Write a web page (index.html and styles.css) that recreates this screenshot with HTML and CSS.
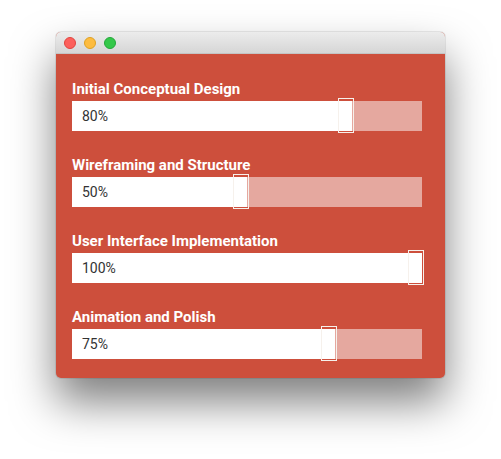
FILE: index.html
```html
<!DOCTYPE html>
<html>
<head>
<meta charset="utf-8">
<link rel="stylesheet" href="styles.css">
</head>
<body>
<div class="window">
  <div class="titlebar">
    <span class="dot dot-close"></span>
    <span class="dot dot-min"></span>
    <span class="dot dot-max"></span>
  </div>
  <div class="content">
    <div class="item">
      <div class="label">Initial Conceptual Design</div>
      <div class="track"><div class="fill" style="width:80%"><span class="pct">80%</span><span class="handle"></span></div></div>
    </div>
    <div class="item">
      <div class="label">Wireframing and Structure</div>
      <div class="track"><div class="fill" style="width:50%"><span class="pct">50%</span><span class="handle"></span></div></div>
    </div>
    <div class="item">
      <div class="label">User Interface Implementation</div>
      <div class="track"><div class="fill" style="width:100%"><span class="pct">100%</span><span class="handle"></span></div></div>
    </div>
    <div class="item">
      <div class="label">Animation and Polish</div>
      <div class="track"><div class="fill" style="width:75%"><span class="pct">75%</span><span class="handle"></span></div></div>
    </div>
  </div>
</div>
</body>
</html>
```
FILE: styles.css
```css
html, body {
  margin: 0;
  padding: 0;
  background: #ffffff;
}
html {
  height: 100%;
}
body {
  box-sizing: border-box;
  min-height: 100%;
  padding: 32px 0 0 56px;
  font-family: Roboto, "Liberation Sans", sans-serif;
}
.window {
  width: 389px;
  border-radius: 5px;
  overflow: hidden;
  box-shadow: 0 24px 44px rgba(0, 0, 0, 0.5), 0 0 0 1px rgba(0, 0, 0, 0.08);
  background: #cd4f3c;
}
.titlebar {
  height: 21px;
  background: linear-gradient(#ececec, #d6d6d6);
  border-bottom: 1px solid #c4c4c4;
  display: flex;
  align-items: center;
  gap: 8px;
  padding-left: 8px;
}
.dot {
  width: 12px;
  height: 12px;
  border-radius: 50%;
  box-sizing: border-box;
}
.dot-close { background: #fc605c; border: 1px solid #e0443e; }
.dot-min { background: #fdbc40; border: 1px solid #dea123; }
.dot-max { background: #34c84a; border: 1px solid #24a73a; }
.content {
  padding: 27px 23px 19px 16px;
  display: flex;
  flex-direction: column;
  gap: 26px;
}
.label {
  color: #ffffff;
  font-size: 15px;
  font-weight: 700;
  line-height: 17px;
  margin-bottom: 3px;
}
.track {
  position: relative;
  height: 30px;
  width: 350px;
  background: #e5a89f;
}
.fill {
  position: relative;
  height: 100%;
  background: #ffffff;
  display: flex;
  align-items: center;
}
.pct {
  padding-left: 10px;
  font-size: 14px;
  color: #333333;
}
.handle {
  position: absolute;
  right: -2px;
  top: -3px;
  width: 16px;
  height: 35px;
  box-sizing: border-box;
  border: 1.5px solid #f6f1ec;
}
```
